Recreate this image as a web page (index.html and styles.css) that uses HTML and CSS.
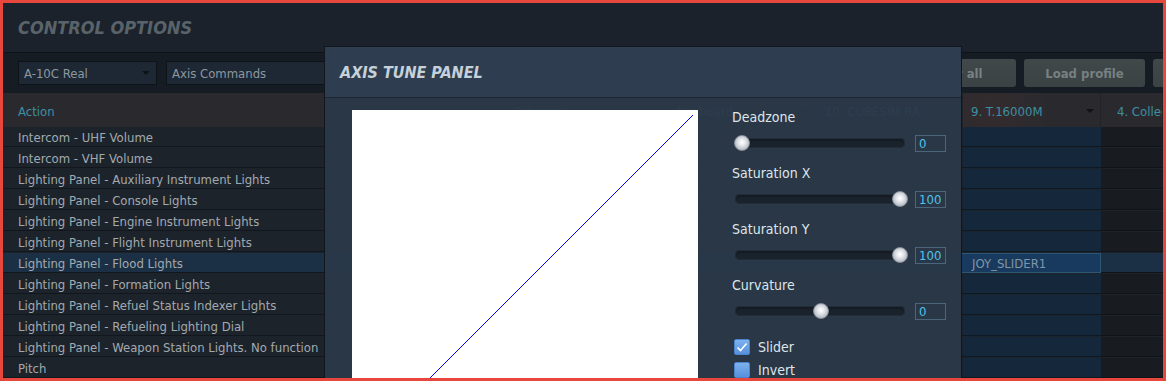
FILE: index.html
```html
<!DOCTYPE html>
<html>
<head>
<meta charset="utf-8">
<title>Control Options</title>
<link rel="stylesheet" href="styles.css">
</head>
<body>
<div class="frame">
  <header class="titlebar"><h1>CONTROL OPTIONS</h1></header>

  <div class="toolbar">
    <div class="select">A-10C Real<span class="arrow"></span></div>
    <div class="select wide">Axis Commands<span class="arrow"></span></div>
    <div class="actions">
      <button class="btn">Clear category</button>
      <button class="btn">Clear all</button>
      <button class="btn">Load profile</button>
      <button class="btn">Save profile as</button>
    </div>
  </div>

  <div class="table">
    <div class="thead">
      <div class="th c-action">Action</div>
      <div class="th c-cat">Category</div>
      <div class="th c-kb">Keyboard<span class="arrow"></span></div>
      <div class="th c-dev">10. CUBESIM RA...<span class="arrow"></span></div>
      <div class="th c-joy">9. T.16000M<span class="arrow"></span></div>
      <div class="th c-coll">4. Collective</div>
    </div>
    <div class="row"><div class="td c-action">Intercom - UHF Volume</div><div class="td c-cat"></div><div class="td c-kb"></div><div class="td c-dev"></div><div class="td c-joy"></div><div class="td c-coll"></div></div>
    <div class="row"><div class="td c-action">Intercom - VHF Volume</div><div class="td c-cat"></div><div class="td c-kb"></div><div class="td c-dev"></div><div class="td c-joy"></div><div class="td c-coll"></div></div>
    <div class="row"><div class="td c-action">Lighting Panel - Auxiliary Instrument Lights</div><div class="td c-cat"></div><div class="td c-kb"></div><div class="td c-dev"></div><div class="td c-joy"></div><div class="td c-coll"></div></div>
    <div class="row"><div class="td c-action">Lighting Panel - Console Lights</div><div class="td c-cat"></div><div class="td c-kb"></div><div class="td c-dev"></div><div class="td c-joy"></div><div class="td c-coll"></div></div>
    <div class="row"><div class="td c-action">Lighting Panel - Engine Instrument Lights</div><div class="td c-cat"></div><div class="td c-kb"></div><div class="td c-dev"></div><div class="td c-joy"></div><div class="td c-coll"></div></div>
    <div class="row"><div class="td c-action">Lighting Panel - Flight Instrument Lights</div><div class="td c-cat"></div><div class="td c-kb"></div><div class="td c-dev"></div><div class="td c-joy"></div><div class="td c-coll"></div></div>
    <div class="row selected"><div class="td c-action">Lighting Panel - Flood Lights</div><div class="td c-cat"></div><div class="td c-kb"></div><div class="td c-dev"></div><div class="td c-joy"><div class="bind">JOY_SLIDER1</div></div><div class="td c-coll"></div></div>
    <div class="row"><div class="td c-action">Lighting Panel - Formation Lights</div><div class="td c-cat"></div><div class="td c-kb"></div><div class="td c-dev"></div><div class="td c-joy"></div><div class="td c-coll"></div></div>
    <div class="row"><div class="td c-action">Lighting Panel - Refuel Status Indexer Lights</div><div class="td c-cat"></div><div class="td c-kb"></div><div class="td c-dev"></div><div class="td c-joy"></div><div class="td c-coll"></div></div>
    <div class="row"><div class="td c-action">Lighting Panel - Refueling Lighting Dial</div><div class="td c-cat"></div><div class="td c-kb"></div><div class="td c-dev"></div><div class="td c-joy"></div><div class="td c-coll"></div></div>
    <div class="row"><div class="td c-action">Lighting Panel - Weapon Station Lights. No function</div><div class="td c-cat"></div><div class="td c-kb"></div><div class="td c-dev"></div><div class="td c-joy"></div><div class="td c-coll"></div></div>
    <div class="row"><div class="td c-action">Pitch</div><div class="td c-cat"></div><div class="td c-kb"></div><div class="td c-dev"></div><div class="td c-joy"></div><div class="td c-coll"></div></div>
  </div>

  <div class="modal">
    <div class="modal-head"><h2>AXIS TUNE PANEL</h2></div>
    <div class="modal-body">
      <div class="graph">
        <svg width="346" height="346" viewBox="0 0 346 346" shape-rendering="crispEdges"><line x1="5" y1="341" x2="341" y2="5" stroke="#0000ff" stroke-width="1"/></svg>
      </div>
      <div class="controls">
        <div class="group">
          <div class="label">Deadzone</div>
          <div class="slider"><div class="track"><span class="knob" style="left:-1px"></span></div><div class="value">0</div></div>
        </div>
        <div class="group">
          <div class="label">Saturation X</div>
          <div class="slider"><div class="track"><span class="knob" style="left:157px"></span></div><div class="value">100</div></div>
        </div>
        <div class="group">
          <div class="label">Saturation Y</div>
          <div class="slider"><div class="track"><span class="knob" style="left:157px"></span></div><div class="value">100</div></div>
        </div>
        <div class="group">
          <div class="label">Curvature</div>
          <div class="slider"><div class="track"><span class="knob" style="left:78px"></span></div><div class="value">0</div></div>
        </div>
        <div class="checks">
          <label class="check"><span class="box on"><svg width="14" height="14" viewBox="0 0 14 14"><polyline points="2.5,7.5 5.5,10.5 11.5,3.5" fill="none" stroke="#ffffff" stroke-width="1.6"/></svg></span>Slider</label>
          <label class="check"><span class="box"></span>Invert</label>
        </div>
      </div>
    </div>
  </div>
</div>
</body>
</html>
```
FILE: styles.css
```css
body {
  margin: 0;
  background: #1b222b;
}

.frame {
  width: 1166px;
  height: 381px;
  box-sizing: border-box;
  border: 3px solid #e8473d;
  position: relative;
  overflow: hidden;
  background: #1b222b;
  font-family: "DejaVu Sans Condensed", "DejaVu Sans", sans-serif;
  font-stretch: condensed;
}

.titlebar {
  height: 49px;
  border-bottom: 1px solid #0f1318;
  display: flex;
  align-items: center;
  padding-left: 15px;
  background: #1b222b;
}

.titlebar h1 {
  margin: 0;
  font-size: 18px;
  font-weight: bold;
  font-style: italic;
  color: #59636a;
}

.toolbar {
  height: 40px;
  display: flex;
  align-items: center;
  gap: 9px;
  padding-left: 15px;
  background: #161c24;
}

.select {
  flex: none;
  width: 139px;
  height: 24px;
  box-sizing: border-box;
  border: 1px solid #0e1318;
  background: #1e2835;
  color: #8d979f;
  font-size: 13px;
  display: flex;
  align-items: center;
  justify-content: space-between;
  padding: 0 6px 0 5px;
}

.select.wide {
  width: 300px;
}

.arrow {
  width: 0;
  height: 0;
  border-left: 4px solid transparent;
  border-right: 4px solid transparent;
  border-top: 4px solid #0e1216;
}

.actions {
  flex: none;
  display: flex;
  gap: 8px;
  margin-left: 291px;
}

.btn {
  flex: none;
  width: 121px;
  height: 28px;
  border: 0;
  border-radius: 3px;
  background: linear-gradient(#404849, #3a4244);
  color: #778082;
  font-family: inherit;
  font-stretch: condensed;
  font-size: 13px;
  font-weight: bold;
  padding: 0;
  white-space: nowrap;
}

.table {
  display: flex;
  flex-direction: column;
}

.thead {
  height: 34px;
  display: flex;
  background: radial-gradient(circle at 990px 18px, rgba(100, 50, 42, 0.18), rgba(100, 50, 42, 0) 55px), #2a2a2e;
}

.th {
  box-sizing: border-box;
  display: flex;
  align-items: center;
  justify-content: space-between;
  padding-top: 2px;
  font-size: 13px;
  color: #3d8fa2;
  border-right: 1px solid #222326;
  white-space: nowrap;
  overflow: hidden;
}

.c-action { flex: none; width: 494px; padding-left: 15px; box-sizing: border-box; }
.c-cat { flex: none; width: 166px; padding-left: 16px; box-sizing: border-box; }
.c-kb { flex: none; width: 154px; padding-right: 9px; padding-left: 15px; box-sizing: border-box; }
.c-dev { flex: none; width: 146px; padding-right: 6px; padding-left: 8px; box-sizing: border-box; }
.c-joy { flex: none; width: 138px; padding-right: 6px; padding-left: 8px; box-sizing: border-box; }
.c-coll { flex: 1; padding-left: 16px; box-sizing: border-box; }

.row {
  display: flex;
  height: 21px;
  background: #1d232b;
}

.td {
  height: 20px;
  box-sizing: border-box;
  padding-top: 1px;
  border-bottom: 1px solid #12171d;
  font-size: 13px;
  line-height: 19px;
  color: #a2aab0;
  white-space: nowrap;
}

.td.c-joy {
  background: #15283b;
  border-bottom-color: #0e1926;
  padding: 0;
}

.td.c-coll {
  background: #181c21;
  border-bottom-color: #101317;
}

.row.selected .td {
  background: #1c3045;
}

.row.selected .td.c-joy {
  background: #15283b;
}

.bind {
  height: 20px;
  box-sizing: border-box;
  margin-left: -6px;
  border: 1px solid #2b5773;
  background: #183a5e;
  color: #8096a6;
  line-height: 19px;
  padding-left: 14px;
}

.modal {
  position: absolute;
  left: 321px;
  top: 43px;
  width: 638px;
  height: 400px;
  box-sizing: border-box;
  border: 1px solid #11161c;
  background: rgba(42, 56, 72, 0.94);
}

.modal-head {
  height: 50px;
  display: flex;
  align-items: center;
  padding-left: 15px;
  background: #2e3e50;
  border-bottom: 1px solid #1b2430;
}

.modal-head h2 {
  margin: 0;
  font-size: 16px;
  font-weight: bold;
  font-style: italic;
  color: #c6d1d9;
}

.modal-body {
  display: flex;
  gap: 34px;
  padding: 12px 0 0 27px;
}

.graph {
  flex: none;
  width: 346px;
  height: 346px;
  background: #ffffff;
}

.graph svg {
  display: block;
}

.controls {
  flex: none;
  width: 214px;
  display: flex;
  flex-direction: column;
}

.group {
  display: flex;
  flex-direction: column;
  gap: 10px;
  margin-bottom: 14px;
}

.label {
  height: 14px;
  line-height: 14px;
  font-size: 14px;
  color: #dfe5ea;
}

.slider {
  display: flex;
  align-items: center;
  gap: 10px;
  height: 18px;
}

.track {
  position: relative;
  flex: none;
  width: 170px;
  height: 10px;
  margin-left: 3px;
  border-radius: 5px;
  background: #1a222c;
  box-shadow: inset 0 0 0 1px #232d39, inset 0 3px 2px #151b23;
}

.knob {
  position: absolute;
  top: -3px;
  width: 16px;
  height: 16px;
  box-sizing: border-box;
  border-radius: 50%;
  border: 1px solid #8a9099;
  background: radial-gradient(circle at 50% 45%, #ffffff 0%, #e6e9ee 30%, #b9bec6 70%, #8e949c 100%);
}

.value {
  flex: none;
  width: 31px;
  height: 17px;
  box-sizing: border-box;
  border: 1px solid #4b667c;
  color: #4fc3ea;
  font-size: 13px;
  line-height: 15px;
  padding-left: 3px;
}

.checks {
  display: flex;
  flex-direction: column;
  gap: 3px;
  margin-top: 3px;
}

.check {
  display: flex;
  align-items: center;
  gap: 8px;
  height: 20px;
  margin-left: 2px;
  font-size: 14px;
  color: #dfe5ea;
}

.box {
  flex: none;
  width: 16px;
  height: 16px;
  box-sizing: border-box;
  border-radius: 2px;
  border: 1px solid #4a84cc;
  background: linear-gradient(#7cb2ee, #5790dc);
  display: flex;
  align-items: center;
  justify-content: center;
}
```
